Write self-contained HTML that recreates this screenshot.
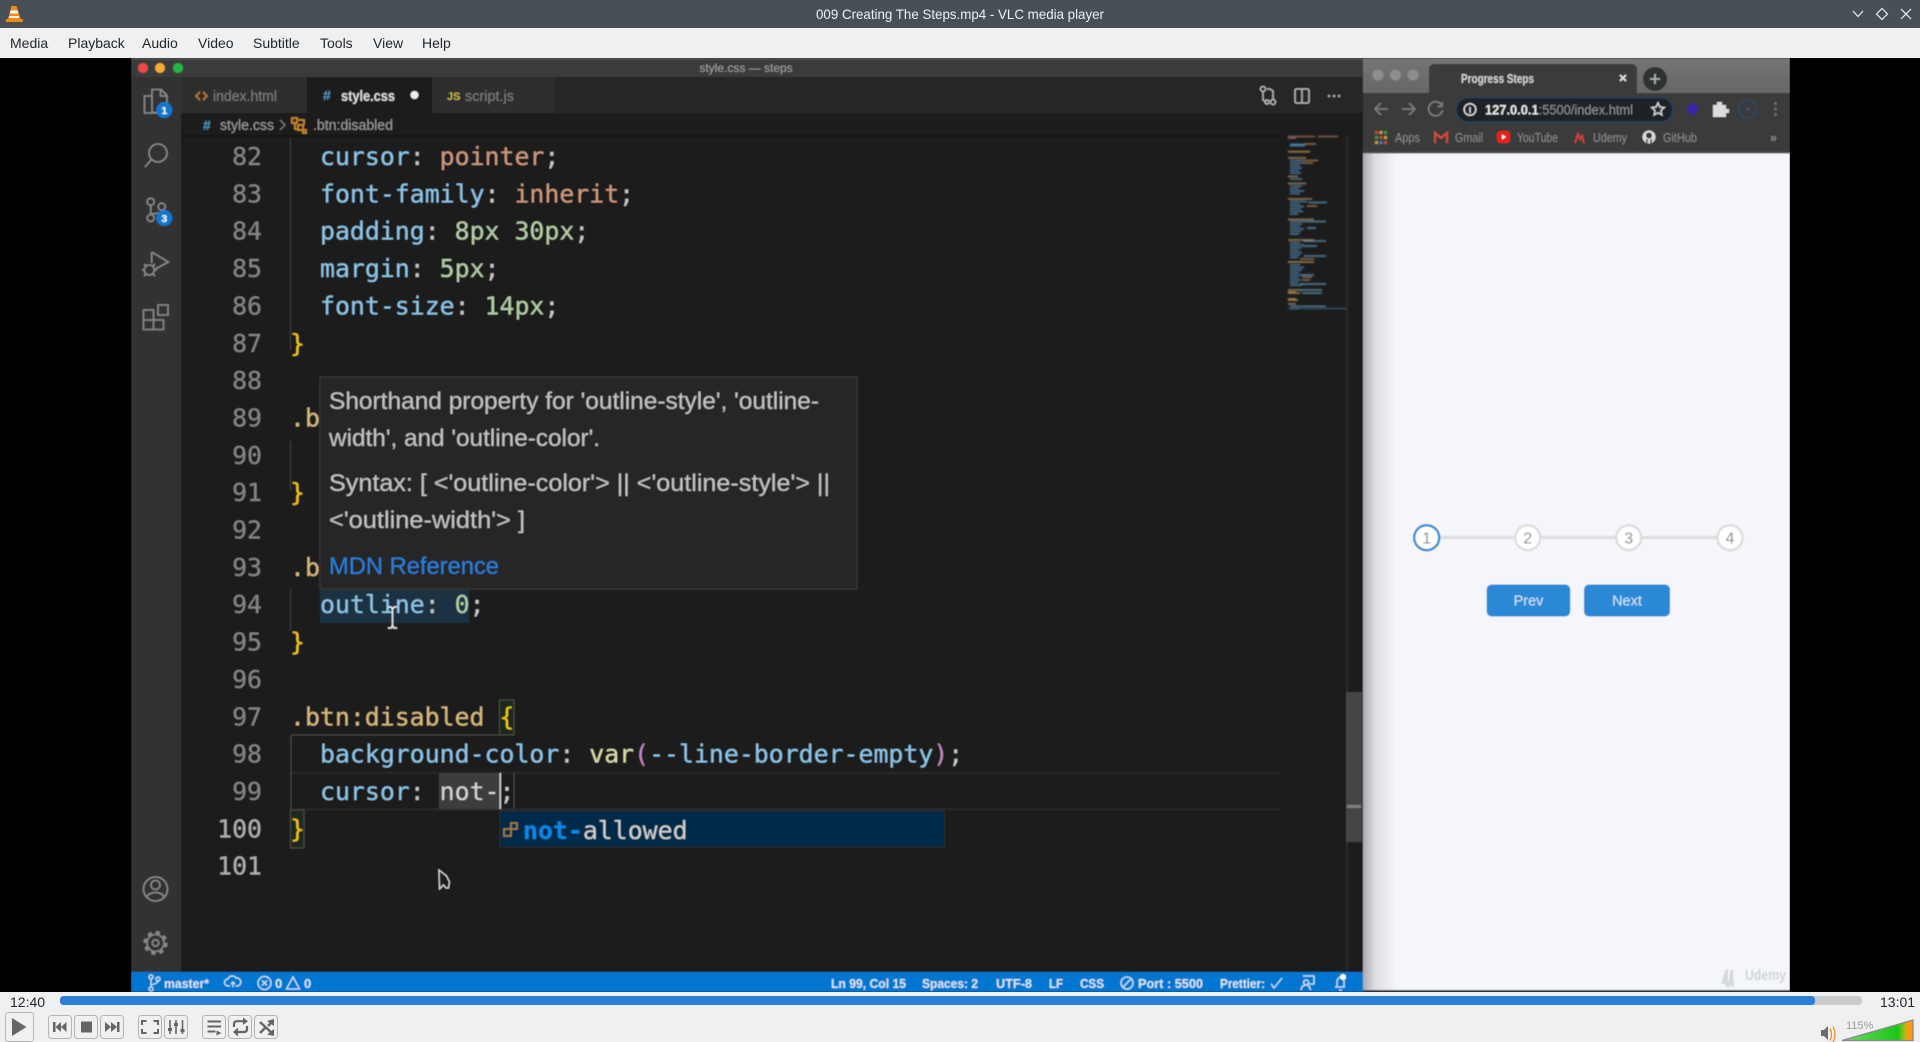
<!DOCTYPE html>
<html lang="en"><head><meta charset="utf-8"><title>009 Creating The Steps.mp4 - VLC media player</title>
<style>
html,body{margin:0;padding:0;width:1920px;height:1042px;overflow:hidden;background:#000}
svg{display:block;position:absolute;left:0;top:0}
text{font-family:"Liberation Sans",sans-serif;white-space:pre}
.c text,text.m{font-family:"DejaVu Sans Mono","Liberation Mono",monospace;font-size:24.85px}
.n text{fill:#858585;text-anchor:end}
.p{fill:#8fc6e8}.v{fill:#cf9a7e}.g{fill:#b5cea8}.s{fill:#d7ba7d}.y{fill:#f5c518}.w{fill:#c8c8c8}.f{fill:#dcdcaa}.k{fill:#c586c0}
.st text{font-size:13px;fill:#d6e6f5;font-weight:bold}
.ai{fill:none;stroke:#8a8a8a;stroke-width:1.6}
.bm text{font-size:12.5px;fill:#8a8a8a}
.b{fill:#eff0f1;stroke:#b4b5b6;stroke-width:1}
.i{fill:#636566}
.menu text{font-size:14px;fill:#232629}
</style></head><body>
<svg width="1920" height="1042" viewBox="0 0 1920 1042" xmlns="http://www.w3.org/2000/svg">
<defs>
<filter id="bl" x="0" y="0" width="100%" height="100%"><feGaussianBlur stdDeviation="0.65"/></filter>
<filter id="bl2"><feGaussianBlur stdDeviation="0.5"/></filter>
<linearGradient id="sh" x1="0" x2="1" y1="0" y2="0"><stop offset="0" stop-color="#a9aaad"/><stop offset=".35" stop-color="#dcdde1"/><stop offset="1" stop-color="#f4f6fb"/></linearGradient>
<linearGradient id="vol" x1="0" x2="1" y1="0" y2="0"><stop offset="0" stop-color="#6fdc60"/><stop offset=".78" stop-color="#1cc41c"/><stop offset=".87" stop-color="#8cc414"/><stop offset=".92" stop-color="#ff9a10"/><stop offset="1" stop-color="#ff9a10"/></linearGradient>
<linearGradient id="top" x1="0" x2="0" y1="0" y2="1"><stop offset="0" stop-color="#757575"/><stop offset="1" stop-color="#666"/></linearGradient>
</defs>

<rect width="1920" height="1042" fill="#000"/>

<!-- VIDEO -->
<g filter="url(#bl)">
<!-- VS Code -->
<rect x="131" y="58" width="1232" height="934" fill="#1e1e1e"/>
<rect x="131" y="58" width="1232" height="19" fill="#3a3a3a"/>
<rect x="131" y="58" width="1232" height="1.5" fill="#5a5a5a"/>
<rect x="131" y="77" width="50" height="895" fill="#333"/>
<rect x="181" y="77" width="1182" height="36" fill="#252526"/>
<circle cx="143" cy="68" r="5" fill="#ee4b44"/><circle cx="160" cy="68" r="5" fill="#f1ae30"/><circle cx="178" cy="68" r="5" fill="#24b744"/>
<text x="746" y="72" font-size="12" fill="#a0a0a0" text-anchor="middle">style.css — steps</text>

<rect x="181" y="77" width="126" height="36" fill="#2d2d2d"/>
<rect x="307" y="77" width="125" height="36" fill="#1e1e1e"/>
<rect x="432" y="77" width="123" height="36" fill="#2d2d2d"/>
<path d="M200 92l-4 4 4 4M203 92l4 4-4 4" fill="none" stroke="#c07a3a" stroke-width="1.600"/>
<text x="213" y="101" font-size="14.5" fill="#7f7f7f" textLength="64" lengthAdjust="spacingAndGlyphs">index.html</text>
<text x="323" y="100" font-size="14" fill="#4f94bf" font-weight="bold">#</text>
<text x="341" y="101" font-size="14.5" fill="#dcdcdc" font-weight="bold" textLength="54" lengthAdjust="spacingAndGlyphs">style.css</text>
<circle cx="414.5" cy="95" r="4" fill="#eee"/>
<text x="447" y="100" font-size="11" fill="#c3b54a" font-weight="bold">JS</text>
<text x="465" y="101" font-size="14.5" fill="#7f7f7f" textLength="49" lengthAdjust="spacingAndGlyphs">script.js</text>

<!-- breadcrumb -->
<text x="203" y="130" font-size="14" fill="#4f94bf" font-weight="bold">#</text>
<text x="220" y="130" font-size="14.5" fill="#9a9a9a" textLength="54" lengthAdjust="spacingAndGlyphs">style.css</text>
<path d="M280 120l5 5-5 5" fill="none" stroke="#777" stroke-width="1.3"/>
<g fill="none" stroke="#c9852c" stroke-width="1.8"><rect x="292" y="118" width="5" height="5"/><rect x="298" y="125" width="5" height="5"/><rect x="303" y="130" width="3" height="3"/><path d="M295 123v6h3M298 120h6v5"/></g>
<text x="313" y="130" font-size="14.5" fill="#9a9a9a" textLength="80" lengthAdjust="spacingAndGlyphs">.btn:disabled</text>
<rect x="181" y="135" width="1100" height="2" fill="#161616"/>

<!-- activity bar icons -->
<g class="ai">
<path d="M152 89.5h9l6 6v17h-15zM160.5 90v6h6M152 96h-7.500v17h15v-1"/>
<circle cx="158" cy="153" r="9"/><path d="M151.5 159.500L145 167"/>
<circle cx="150.7" cy="201.7" r="3.5"/><circle cx="150.7" cy="218" r="3.5"/><circle cx="161.7" cy="206.7" r="3.5"/><path d="M150.7 205.2v9.300M161.7 210.200c0 3-5 3-11 4"/>
<path d="M151.7 252l16.600 10-13 7M151.7 252v11"/><circle cx="149.3" cy="270" r="5"/><path d="M144 264l2 2M155 264l-2 2M142 270h2M155 270h2M144 276l2-2M155 276l-2-2"/>
<path d="M143.5 310h10v10h-10zM143.5 320h10v9.500h-10zM153.5 320h10v9.500h-10zM158 305h10v10h-10z"/>
<circle cx="155.5" cy="889" r="12"/><circle cx="155.5" cy="885" r="4.5"/><path d="M147 897c2-6 15-6 17 0"/>
<circle cx="155.5" cy="943" r="10.5" stroke-width="3" stroke-dasharray="4 4.25"/>
<circle cx="155.5" cy="943" r="8.5" fill="#333"/><circle cx="155.5" cy="943" r="3.2"/>
</g>
<circle cx="164.3" cy="110" r="8" fill="#0a78d0"/><text x="164.3" y="114" font-size="10.5" fill="#fff" font-weight="bold" text-anchor="middle">1</text>
<circle cx="164.3" cy="218" r="8" fill="#0a78d0"/><text x="164.3" y="222" font-size="10.5" fill="#fff" font-weight="bold" text-anchor="middle">3</text>

<!-- top right icons -->
<g fill="none" stroke="#b5b5b5" stroke-width="1.5"><circle cx="1263" cy="89" r="2.5"/><circle cx="1273" cy="102" r="2.5"/><circle cx="1267" cy="102" r="2"/><path d="M1263 92v8l3 2M1273 99v-8l-3-2-3 0"/>
<rect x="1295" y="89" width="14" height="14" rx="1.5"/><path d="M1302 89v14"/></g>
<circle cx="1329" cy="96" r="1.3" fill="#aaa"/><circle cx="1334" cy="96" r="1.3" fill="#aaa"/><circle cx="1339" cy="96" r="1.3" fill="#aaa"/>

<!-- indent guides -->
<path d="M290.5 138v212M290.5 441v50M290.5 589v41" stroke="#3a3a3a" stroke-width="1.2"/>

<!-- line numbers -->
<g class="c n">
<text x="262" y="165">82</text><text x="262" y="202.35">83</text><text x="262" y="239.7">84</text><text x="262" y="277.05">85</text><text x="262" y="314.4">86</text><text x="262" y="351.75">87</text><text x="262" y="389.1">88</text><text x="262" y="426.45">89</text><text x="262" y="463.8">90</text><text x="262" y="501.15">91</text><text x="262" y="538.5">92</text><text x="262" y="575.85">93</text><text x="262" y="613.2">94</text><text x="262" y="650.55">95</text><text x="262" y="687.9">96</text><text x="262" y="725.25">97</text><text x="262" y="762.6">98</text><text x="262" y="799.95">99</text><text x="262" y="837.3" style="fill:#b0b0b0">100</text><text x="262" y="874.65" style="fill:#b0b0b0">101</text>
</g>

<!-- highlights -->
<rect x="320" y="590" width="149" height="33" fill="#1d3242"/>
<path d="M291 773H1280M291 809.5H1280" stroke="#2c2c2c" stroke-width="1.5"/>
<rect x="439" y="773" width="61" height="36" fill="#3c3d3e"/>
<path d="M514 773v36M291 735v75M291 735h223M499.5 700v35M514 700v35" stroke="#4c4c44" stroke-width="1" fill="none"/>
<rect x="290.5" y="810" width="13.5" height="38" fill="#1e2a1e" stroke="#4c4c44"/>
<rect x="499.5" y="700" width="14.5" height="35" fill="#1e2a1e" stroke="#4c4c44"/>
<rect x="499.5" y="773" width="1.5" height="36" fill="#d0d0d0"/>

<!-- code -->
<g class="c">
<text x="320" y="165"><tspan class="p">cursor</tspan><tspan class="w">: </tspan><tspan class="v">pointer</tspan><tspan class="w">;</tspan></text>
<text x="320" y="202.35"><tspan class="p">font-family</tspan><tspan class="w">: </tspan><tspan class="v">inherit</tspan><tspan class="w">;</tspan></text>
<text x="320" y="239.7"><tspan class="p">padding</tspan><tspan class="w">: </tspan><tspan class="g">8px 30px</tspan><tspan class="w">;</tspan></text>
<text x="320" y="277.05"><tspan class="p">margin</tspan><tspan class="w">: </tspan><tspan class="g">5px</tspan><tspan class="w">;</tspan></text>
<text x="320" y="314.4"><tspan class="p">font-size</tspan><tspan class="w">: </tspan><tspan class="g">14px</tspan><tspan class="w">;</tspan></text>
<text x="290" y="351.75" class="y">}</text>
<text x="290" y="426.45" class="s">.b</text>
<text x="290" y="501.15" class="y">}</text>
<text x="290" y="575.85" class="s">.b</text>
<text x="320" y="613.2"><tspan class="p">outline</tspan><tspan class="w">: </tspan><tspan class="g">0</tspan><tspan class="w">;</tspan></text>
<text x="290" y="650.55" class="y">}</text>
<text x="290" y="725.25"><tspan class="s">.btn:disabled </tspan><tspan class="y">{</tspan></text>
<text x="320" y="762.6"><tspan class="p">background-color</tspan><tspan class="w">: </tspan><tspan class="f">var</tspan><tspan class="k">(</tspan><tspan class="p">--line-border-empty</tspan><tspan class="k">)</tspan><tspan class="w">;</tspan></text>
<text x="320" y="799.95"><tspan class="p">cursor</tspan><tspan class="w">: </tspan><tspan fill="#d4d4d4">not-</tspan><tspan class="w">;</tspan></text>
<text x="290" y="837.3" class="y">}</text>
</g>

<!-- tooltip -->
<rect x="320" y="377" width="537" height="212" fill="#252526" stroke="#363636" stroke-width="1.5"/>
<g font-size="24.5" fill="#c4c4c4">
<text x="329" y="409" textLength="490" lengthAdjust="spacingAndGlyphs">Shorthand property for 'outline-style', 'outline-</text>
<text x="329" y="446" textLength="271" lengthAdjust="spacingAndGlyphs">width', and 'outline-color'.</text>
<text x="329" y="491" textLength="501" lengthAdjust="spacingAndGlyphs">Syntax: [ &lt;'outline-color'&gt; || &lt;'outline-style'&gt; ||</text>
<text x="329" y="528" textLength="196" lengthAdjust="spacingAndGlyphs">&lt;'outline-width'&gt; ]</text>
<text x="329" y="574" textLength="170" lengthAdjust="spacingAndGlyphs" fill="#2a80dc">MDN Reference</text>
</g>

<!-- suggest -->
<rect x="500" y="811" width="444.5" height="36" fill="#04294a" stroke="#2a2d2e" stroke-width="1"/>
<g fill="none" stroke="#b0803c" stroke-width="1.6"><rect x="504" y="829" width="7" height="7"/><rect x="511" y="823" width="6" height="6"/></g>
<text class="m" x="523" y="839"><tspan fill="#0d86e8" font-weight="bold">not-</tspan><tspan fill="#cfcfcf">allowed</tspan></text>

<!-- minimap -->
<path d="M1347 135V972" stroke="#2e2e2e" stroke-width="1.2"/>
<g filter="url(#bl2)" fill="none" stroke-width="1.3" opacity=".85">
<path stroke="#a5775c" d="M1288 136.500h27M1318 136.500h20"/>
<path stroke="#9a6f90" d="M1288 138h8"/>
<path stroke="#c09a60" d="M1288 151.700h22M1288 158h18M1288 176.500h10M1288 183.500h18M1288 199h24M1288 219.500h26M1288 240h26M1288 262h26M1288 290h14M1288 297h0M1288 271h0"/>
<path stroke="#5b95c2" stroke-width="2.500" d="M1290 145h15"/>
<path stroke="#b08a60" d="M1305 144h11M1303 160.500h15M1303 163h10M1303 218h0M1307 206h10M1307 270h0M1307 227h0"/>
<path stroke="#5b95c2" d="M1290 160.500h13M1290 163h14M1290 165.500h10M1290 168h12M1290 170.500h9M1290 173h11"/>
<path stroke="#5b95c2" d="M1290 179h12M1290 186h12M1290 188.500h9M1290 191h14M1290 193.500h10"/>
<path stroke="#5b95c2" d="M1290 201.500h17M1290 204h10M1290 206.500h14M1290 209h11M1290 211.500h13M1290 214h8"/>
<path stroke="#5b95c2" d="M1290 221.500h18M1290 224h12M1290 226.500h10M1290 229h14M1290 231.500h11M1290 234h9"/>
<path stroke="#6aa0c6" d="M1308 202.500h19M1308 221.500h18M1307 228h9"/>
<path stroke="#5b95c2" d="M1290 242.500h10M1290 245h14M1290 247.500h12M1290 250h9M1290 252.500h12M1290 255h10M1290 257.500h8"/>
<path stroke="#5b95c2" d="M1290 265h10M1290 267.500h14M1290 270h12M1290 272.500h9M1290 275h12M1290 277.500h9M1290 280h11M1290 282.500h8M1290 285h12"/>
<path stroke="#6aa0c6" d="M1304 256h22M1303 241h23M1303 246h14M1304 256h0M1302 275h12M1300 284h26"/>
<path stroke="#b08a60" d="M1300 259h14M1302 277h10M1302 280h8"/>
<path stroke="#c09a60" d="M1288 262h16M1288 293h12M1288 300h10M1288 305h0"/>
<path stroke="#6aa0c6" d="M1302 293h20M1298 290h24"/>
<path stroke="#5b95c2" d="M1290 296h0M1290 271h0"/>
<path stroke="#5b95c2" d="M1290 300.500h0"/>
<path stroke="#c09a60" d="M1288 292h8M1288 299h8M1288 304h8"/>
<path stroke="#5b95c2" d="M1290 306.500h12M1290 308.500h9"/>
<path stroke="#6aa0c6" d="M1302 306.500h24"/>
</g>
<rect x="1288" y="307.500" width="59" height="2" fill="#2e4a62" opacity=".7"/>
<rect x="1346" y="692" width="16" height="150" fill="#454545"/>
<rect x="1347" y="805" width="14" height="3" fill="#808080"/>

<!-- status bar -->
<rect x="131" y="972" width="1232" height="20" fill="#0076d0"/>
<g class="st">
<g fill="none" stroke="#cfe3f5" stroke-width="1.3"><circle cx="151" cy="977" r="2"/><circle cx="151" cy="989" r="2"/><circle cx="158" cy="979" r="2"/><path d="M151 979v8M158 981c0 3-7 3-7 5"/>
<path d="M230 986h-2a3.500 3.500 0 0 1 0-7 4.500 4.500 0 0 1 8-1 3.500 3.500 0 0 1 1.500 8h-2M233 987v-5M231 984l2-2 2 2"/>
<circle cx="264.5" cy="983" r="6.5"/><path d="M262 980.500l5 5M267 980.500l-5 5M293 977l-6.500 12h13z"/></g>
<text x="164" y="988" textLength="45" lengthAdjust="spacingAndGlyphs">master*</text>
<text x="275" y="988">0</text><text x="304" y="988">0</text>
<text x="831" y="988" textLength="75" lengthAdjust="spacingAndGlyphs">Ln 99, Col 15</text>
<text x="922" y="988" textLength="56" lengthAdjust="spacingAndGlyphs">Spaces: 2</text>
<text x="996" y="988" textLength="36" lengthAdjust="spacingAndGlyphs">UTF-8</text>
<text x="1049" y="988" textLength="14" lengthAdjust="spacingAndGlyphs">LF</text>
<text x="1080" y="988" textLength="24" lengthAdjust="spacingAndGlyphs">CSS</text>
<g fill="none" stroke="#cfe3f5" stroke-width="1.3"><circle cx="1127" cy="983" r="6"/><path d="M1123 987l8-8"/></g>
<text x="1138" y="988" textLength="65" lengthAdjust="spacingAndGlyphs">Port : 5500</text>
<text x="1220" y="988" textLength="45" lengthAdjust="spacingAndGlyphs">Prettier:</text>
<path d="M1271 984l3 4 8-10" fill="none" stroke="#cfe3f5" stroke-width="1.2"/>
<g fill="none" stroke="#cfe3f5" stroke-width="1.3"><path d="M1303 976h11v8h-5M1306 980a2.500 2.500 0 1 0 .1 0M1301 990c.5-3 2-5 5-5s4 2 4.500 5"/>
<path d="M1335 987h10M1337 987v-5c0-3 2-5 4-5s3 1 3 3v7M1339 990h3"/></g>
<circle cx="1343" cy="977" r="3" fill="#fff"/>
</g>

<!-- CHROME -->
<rect x="1363" y="58" width="427" height="36" fill="url(#top)"/>
<circle cx="1378" cy="75" r="5.5" fill="#8e8e8e"/><circle cx="1395.5" cy="75" r="5.5" fill="#8e8e8e"/><circle cx="1413" cy="75" r="5.5" fill="#8e8e8e"/>
<path d="M1429 94v-25a5 5 0 0 1 5-5h198a5 5 0 0 1 5 5v25z" fill="#3b3b3b"/>
<text x="1461" y="83" font-size="12.5" font-weight="bold" fill="#d4d4d4" textLength="73" lengthAdjust="spacingAndGlyphs">Progress Steps</text>
<path d="M1620 75l6 6M1626 75l-6 6" stroke="#e0e0e0" stroke-width="1.8"/>
<circle cx="1655" cy="79" r="12" fill="#2e3233"/><path d="M1655 74v10M1650 79h10" stroke="#b0b0b0" stroke-width="1.8"/>
<rect x="1363" y="93" width="427" height="60" fill="#3b3b3b"/>
<g fill="none" stroke="#7a7a7a" stroke-width="1.8">
<path d="M1388 109h-13M1381 103l-6 6 6 6M1402 109h13M1409 103l6 6-6 6"/>
<path d="M1441.5 105a7 7 0 1 0 1 5M1442 102v4.500h-4.500"/>
</g>
<rect x="1456" y="97.5" width="217" height="24.5" rx="12.2" fill="#1d2226" stroke="#25425e" stroke-width="1.6"/>
<circle cx="1470" cy="109.5" r="5.8" fill="none" stroke="#d8d8d8" stroke-width="1.5"/><path d="M1470 107v6" stroke="#d8d8d8" stroke-width="1.6"/>
<text x="1485" y="114.5" font-size="13.5" textLength="148" lengthAdjust="spacingAndGlyphs"><tspan fill="#e9e9e9" font-weight="bold">127.0.0.1</tspan><tspan fill="#8d9193">:5500/index.html</tspan></text>
<path d="M1658 103l1.900 4 4.300.5-3.200 3 .8 4.300-3.800-2.100-3.800 2.100.8-4.300-3.200-3 4.300-.5z" fill="none" stroke="#d0d0d0" stroke-width="1.5"/>
<path d="M1692.6 102l6.400 7-6.400 7.500-6.400-7.500z" fill="#3b23a8"/>
<path d="M1713 105h4v-3h5v3h4v4h3v4h-3v4h-13z" fill="#dcdcdc"/>
<circle cx="1747.7" cy="109" r="9" fill="none" stroke="#2c4a66" stroke-width="1.5"/><circle cx="1747.7" cy="109" r="1.5" fill="#3a5a78"/>
<g fill="#6d6d6d"><circle cx="1775.5" cy="103.5" r="1.5"/><circle cx="1775.5" cy="109" r="1.5"/><circle cx="1775.5" cy="114.5" r="1.5"/></g>
<!-- bookmarks -->
<g fill="#c14a3a"><rect x="1375" y="131" width="3" height="3"/><rect x="1379.5" y="131" width="3" height="3" fill="#c89a2e"/><rect x="1384" y="131" width="3" height="3" fill="#3a9a4a"/>
<rect x="1375" y="136" width="3" height="3" fill="#3a9a4a"/><rect x="1379.5" y="136" width="3" height="3"/><rect x="1384" y="136" width="3" height="3" fill="#c89a2e"/>
<rect x="1375" y="141" width="3" height="3" fill="#c89a2e"/><rect x="1379.5" y="141" width="3" height="3" fill="#3a7ac8"/><rect x="1384" y="141" width="3" height="3"/></g>
<g class="bm">
<text x="1395" y="142" textLength="25" lengthAdjust="spacingAndGlyphs">Apps</text>
<path d="M1435 143v-10l6 5 6-5v10" fill="none" stroke="#d04a3a" stroke-width="2.2"/>
<text x="1455" y="142" textLength="28" lengthAdjust="spacingAndGlyphs">Gmail</text>
<rect x="1497" y="131" width="13" height="12" rx="3" fill="#e62117"/><path d="M1502 134.500v5l4-2.500z" fill="#fff"/>
<text x="1517" y="142" textLength="41" lengthAdjust="spacingAndGlyphs">YouTube</text>
<path d="M1575 143l3-9 2 5 2-3 2 7" fill="none" stroke="#c8403a" stroke-width="2"/>
<text x="1593" y="142" textLength="34" lengthAdjust="spacingAndGlyphs">Udemy</text>
<circle cx="1649" cy="137" r="6.5" fill="#dcdcdc"/><circle cx="1649" cy="135.5" r="3" fill="#3b3b3b"/><path d="M1647 139v4M1651 139v4" stroke="#3b3b3b" stroke-width="1.5"/>
<text x="1663" y="142" textLength="34" lengthAdjust="spacingAndGlyphs">GitHub</text>
<text x="1770" y="142" font-size="12" fill="#b8b8b8" font-weight="bold">»</text>
</g>
<rect x="1363" y="152" width="427" height="1.5" fill="#5a5a5a"/>

<!-- page -->
<rect x="1363" y="153.5" width="427" height="837" fill="#f4f6fb"/>
<rect x="1363" y="153.5" width="34" height="837" fill="url(#sh)"/>
<rect x="1363" y="990" width="427" height="2" fill="#3d3f42"/>

<path d="M1427 537.5H1730" stroke="#e0e0e0" stroke-width="3.5"/>
<g fill="#fff" stroke="#dedede" stroke-width="2.5">
<circle cx="1527.7" cy="537.7" r="12.5"/><circle cx="1628.7" cy="537.7" r="12.5"/><circle cx="1730" cy="537.7" r="12.5"/>
<circle cx="1426.7" cy="537.7" r="12.5" stroke="#3a8fd4"/>
</g>
<g font-size="16" fill="#8a8a8a" text-anchor="middle">
<text x="1426.7" y="543.5">1</text><text x="1527.7" y="543.5">2</text><text x="1628.7" y="543.5">3</text><text x="1730" y="543.5">4</text>
</g>
<rect x="1486.7" y="584.5" width="83.5" height="32" rx="5" fill="#2a88d6"/>
<rect x="1584" y="584.5" width="86" height="32" rx="5" fill="#2a88d6"/>
<g font-size="14.5" fill="#d3e6f7" text-anchor="middle"><text x="1528.5" y="605.5">Prev</text><text x="1627" y="605.5">Next</text></g>
<g><path d="M1723 984c2-6 3-12 4-14-1 6-1 16 1 16s3-10 4-16c-1 6 0 16 2 16" fill="none" stroke="#d4d7dc" stroke-width="3"/><text x="1745" y="980" font-size="15" font-weight="bold" fill="#d0d3d9" textLength="41" lengthAdjust="spacingAndGlyphs">Udemy</text></g>

<!-- mouse cursors -->
<path d="M388 607h3l1.500 2 1.500-2h3M392.500 609v17M388 628h3l1.500-2 1.500 2h3" fill="none" stroke="#eee" stroke-width="1.5"/>
<path d="M439 870l.5 19 4-4 2.500 3h2.500l1-6-3-6z" fill="#1e1e1e" stroke="#e6e6e6" stroke-width="1.1"/>
</g>

<!-- VLC CHROME -->
<rect width="1920" height="28" fill="#475057"/>
<rect y="28" width="1920" height="30" fill="#eff0f1"/>
<text x="960" y="19" font-size="14" fill="#eff0f1" text-anchor="middle" textLength="288" lengthAdjust="spacingAndGlyphs">009 Creating The Steps.mp4 - VLC media player</text>
<path d="M11.5 6h5l4.300 13h2v3H6v-3h2z" fill="#f08a14"/><path d="M10.6 10.500h6.800l.9 3h-8.600zM9.4 16h9.200l.6 2H8.800z" fill="#f5f5f5"/>
<g fill="none" stroke="#eff0f1" stroke-width="1.2">
<path d="M1853 11l5 5.500 5-5.500"/><path d="M1882 8.500l5.500 5.500-5.500 5.500-5.500-5.500z"/><path d="M1901 9l10 10M1911 9l-10 10"/>
</g>
<g class="menu">
<text x="10" y="48">Media</text><text x="68" y="48">Playback</text><text x="142" y="48">Audio</text><text x="198" y="48">Video</text><text x="253" y="48">Subtitle</text><text x="320" y="48">Tools</text><text x="373" y="48">View</text><text x="422" y="48">Help</text>
</g>

<rect y="992" width="1920" height="50" fill="#eff0f1"/>
<text x="10" y="1007" font-size="14" fill="#232629">12:40</text>
<text x="1880" y="1007" font-size="14" fill="#232629">13:01</text>
<rect x="60" y="996" width="1802" height="9" rx="3.5" fill="#c9cacc"/>
<rect x="60" y="996" width="1755" height="9" rx="3.5" fill="#2b7fd6"/>

<rect class="b" x="5.5" y="1012.5" width="28" height="29" rx="2.5"/>
<path class="i" d="M12 1018l14.500 9-14.500 9z"/>
<rect class="b" x="48.5" y="1015.5" width="23" height="23" rx="3"/>
<rect class="b" x="74.5" y="1015.5" width="23" height="23" rx="3"/>
<rect class="b" x="100.5" y="1015.5" width="23" height="23" rx="3"/>
<rect class="b" x="138.5" y="1015.5" width="23" height="23" rx="3"/>
<rect class="b" x="164.5" y="1015.5" width="23" height="23" rx="3"/>
<rect class="b" x="202.5" y="1015.5" width="23" height="23" rx="3"/>
<rect class="b" x="228.5" y="1015.5" width="23" height="23" rx="3"/>
<rect class="b" x="254.5" y="1015.5" width="23" height="23" rx="3"/>
<g class="i">
<path d="M53 1022h2.500v10H53zM55.500 1027l5.500-5v10zM61 1027l5.500-5v10z"/>
<rect x="81" y="1021.5" width="11" height="11"/>
<path d="M105 1022l6 5-6 5zM111 1022l6 5-6 5zM117 1022h2.500v10H117z"/>
</g>
<g fill="none" stroke="#636566" stroke-width="2">
<path d="M142 1025v-4h4.500M153.500 1021h4.500v4M158 1029v4h-4.500M146.500 1033H142v-4"/>
<path d="M170 1020v14M176 1020v14M182.500 1020v14" stroke-width="1.6"/>
<path d="M207.500 1021.500h13.500M207.500 1026.500h13.500M207.500 1031.500h8" stroke-width="2"/>
<path d="M234 1027v-3c0-2 1-2.800 3-2.800h7M247 1026v3c0 2-1 3-3 3h-7" stroke-width="2.200"/>
<path d="M260 1022l13 12M260 1033l5-5M268 1026l4-4" stroke-width="2.400"/>
</g>
<g class="i">
<rect x="168" y="1028" width="4" height="3"/><rect x="174" y="1023" width="4" height="3"/><rect x="180.500" y="1029" width="4" height="3"/>
<path d="M216.500 1030.500l5 2.500-5 2.500zM243 1017.500l5 3.700-5 3.700zM238 1027.500l-5 4.500 5 4.500zM267 1021l7-2v7zM267 1034.500l7 1.500v-7z"/>
</g>
<path d="M1821 1032h3l4-4v14l-4-4h-3z" fill="#6a6c6e" transform="translate(0,-2)"/>
<path d="M1830 1029q3 6 0 12M1833 1027q4 8 0 16" fill="none" stroke="#f0902a" stroke-width="1.3" transform="translate(0,-0.500)"/>
<text x="1846" y="1029" font-size="11" fill="#9a9b9d">115%</text>
<path d="M1842 1040.500L1913 1020v20.500z" fill="url(#vol)" stroke="#888a8c" stroke-width="1.3"/>
</svg>
</body></html>
